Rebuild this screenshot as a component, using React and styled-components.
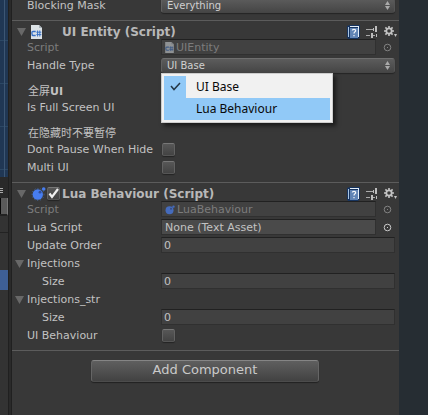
import React from "react";
import styled, { createGlobalStyle, css } from "styled-components";

const GlobalStyle = createGlobalStyle`
  * { box-sizing: border-box; }
  body {
    margin: 0;
    background: #383838;
    color: #c2c2c2;
    font: 11px/16px "DejaVu Sans", "Noto Sans CJK SC", sans-serif;
  }
  button, input, select { font: inherit; color: inherit; }
`;

const Window = styled.div`
  display: grid;
  grid-template-columns: 8px 4px minmax(0, 1fr) 29px;
  min-height: 100vh;
  overflow: hidden;
`;

const LeftDock = styled.div`
  display: flex;
  flex-direction: column;
  background: #333;
`;

const ScenePreview = styled.div`
  height: 177px;
  background:
    linear-gradient(90deg, transparent 4px, #3d5673 4px, #3d5673 5px, transparent 5px),
    repeating-linear-gradient(#203754 0 40px, #2c4865 40px 41px, #203754 41px 43px);
`;

const DockTab = styled.div`
  height: 21px;
  padding-top: 11px;
  background: #292929;
`;

const DockMenu = styled.svg`
  display: block;
  width: 4px;
  height: 6px;
`;

const DockTool = styled.div`
  height: 18px;
  margin-bottom: 16px;
  border-right: 1px solid #777;
  border-bottom: 2px solid #222;
  background: linear-gradient(90deg, #090909 1px, #5a5a5a 1px);
`;

const DockList = styled.div`
  flex: 1;
  padding-top: 37px;
  border-top: 1px solid #222;
`;

const SelectedItem = styled.div`
  height: 20px;
  background: #3e5f96;
`;

const Splitter = styled.div`
  border: solid #202020;
  border-width: 0 1px;
  background: #2a2a2a;
`;

const Inspector = styled.main`
  min-width: 0;
  background: #383838;
`;

const Outside = styled.div`
  background: #262d33;
`;

const Section = styled.section`
  padding-bottom: 6px;
  ${(p) => p.$clipped && css`margin-top: -4px;`}
`;

const Header = styled.header`
  display: flex;
  align-items: center;
  height: 18px;
  padding: 4px 1px 0 5px;
  border-top: 1px solid #5c5c5c;
`;

const Foldout = styled.button`
  display: flex;
  flex: none;
  align-items: center;
  width: ${(p) => (p.$small ? 12 : 14)}px;
  height: 16px;
  padding: 0;
  border: 0;
  background: none;
  color: #686868;
`;

const HeaderIcon = styled.span`
  display: flex;
  flex: none;
  width: 16px;
`;

const HeaderToggle = styled.span`
  display: flex;
  flex: none;
  width: 15px;
`;

const Title = styled.h2`
  flex: 1;
  margin: 0;
  font-size: 12px;
  line-height: 16px;
  white-space: nowrap;
  color: #b8b8b8;
`;

const Tools = styled.div`
  display: flex;
  align-items: center;
  gap: 6px;
`;

const ToolButton = styled.button`
  display: flex;
  padding: 0;
  border: 0;
  background: none;
`;

const Row = styled.div`
  display: grid;
  grid-template-columns: 149px minmax(0, 1fr);
  align-items: center;
  height: 18px;
  padding-right: 4px;
  color: ${(p) => (p.$disabled ? "#7c7c7c" : "#c2c2c2")};
`;

const Label = styled.label`
  padding-top: 2px;
  padding-left: ${(p) => (p.$indent ? 30 : 15)}px;
  white-space: nowrap;
`;

const FoldoutRow = styled.div`
  display: flex;
  align-items: center;
  height: 18px;
  padding-top: 2px;
  padding-left: 3px;
`;

const GroupLabel = styled.h3`
  height: 24px;
  margin: 0;
  padding: 10px 0 0 16px;
  font-size: 11px;
  line-height: 16px;
`;

const Chinese = styled.span`
  font-weight: 400;
`;

const fieldBox = css`
  height: 16px;
  border: 1px solid #303030;
  border-top-color: #212121;
  background: #414141;
`;

const TextField = styled.input`
  ${fieldBox}
  width: 100%;
  padding: 1px 2px 0;
`;

const ObjectLine = styled.div`
  display: grid;
  grid-template-columns: minmax(0, 1fr) 19px;
  align-items: center;
`;

const ObjectField = styled.div`
  ${fieldBox}
  display: flex;
  align-items: center;
  gap: 2px;
  padding: 1px 3px 0;
  line-height: 14px;
  ${(p) => p.$active && css`background: #4a4a4a;`}
`;

const ObjectButton = styled.button`
  display: flex;
  justify-content: center;
  padding: 0 0 0 4px;
  border: 0;
  background: none;
  color: ${(p) => (p.disabled ? "#828282" : "#c8c8c8")};
`;

const PopupBox = styled.div`
  position: relative;
`;

const Popup = styled.select`
  display: block;
  width: 100%;
  height: 15px;
  padding: 0 5px;
  appearance: none;
  border: 1px solid #686868;
  border-color: #6f6f6f #555 #454545 #606060;
  border-radius: 3px;
  background: linear-gradient(#5c5c5c, #464646);
  box-shadow: 0 1px 1px #252525;
  font-size: 10px;
  line-height: 13px;
  color: #d0d0d0;
`;

const PopupArrows = styled.svg`
  position: absolute;
  top: 3px;
  right: 5px;
  pointer-events: none;
`;

const Menu = styled.ul`
  position: absolute;
  z-index: 2;
  top: 15px;
  left: 0;
  width: 172px;
  margin: 0;
  padding: 2px;
  border: 1px solid #ccc;
  background: #f1f1f1;
  box-shadow: 3px 3px 4px #1b1b1b;
  list-style: none;
`;

const MenuItem = styled.button`
  display: grid;
  grid-template-columns: 22px 1fr;
  align-items: center;
  gap: 10px;
  width: 100%;
  height: 22px;
  padding: 0;
  border: 0;
  background: ${(p) => (p.$hover ? "#91c9f7" : "#f1f1f1")};
  color: #080808;
  font: 12px/22px "Noto Sans", sans-serif;
  text-align: left;
`;

const MenuCheck = styled.span`
  display: flex;
  align-items: center;
  justify-content: center;
  height: 22px;
  ${(p) => p.$checked && css`background: #91c9f7;`}
`;

const ToggleBox = styled.span`
  display: grid;
  width: 13px;
  height: 13px;
  ${(p) => !p.$header && css`margin-left: 1px;`}
`;

const Toggle = styled.input`
  grid-area: 1 / 1;
  width: 100%;
  height: 100%;
  margin: 0;
  appearance: none;
  border: 1px solid #626262;
  border-color: #777 #626262 #555;
  border-radius: 2px;
  background: linear-gradient(#575757, #434343);
  box-shadow: 0 1px 1px #242424;
`;

const ToggleMark = styled.svg`
  grid-area: 1 / 1;
  z-index: 1;
  pointer-events: none;
`;

const Footer = styled.footer`
  display: flex;
  justify-content: center;
  padding: 9px 17px 9px 16px;
  border-top: 1px solid #5c5c5c;
`;

const AddButton = styled.button`
  width: 60%;
  min-width: 228px;
  height: 22px;
  padding: 0 0 2px;
  border: 1px solid #606060;
  border-color: #858585 #656565 #4c4c4c;
  border-radius: 3px;
  background: linear-gradient(#5f5f5f, #424242);
  box-shadow: 0 1px 1px #222;
  color: #cacaca;
  font-size: 13px;
  line-height: 18px;
`;

function Triangle() {
  return (
    <svg width="10" height="8" viewBox="0 0 10 8" aria-hidden="true">
      <path d="M0 0h9L4.5 8z" fill="currentColor" />
    </svg>
  );
}

function ScriptIcon({ small }) {
  return (
    <svg width={small ? 9 : 11} height={small ? 11 : 14} viewBox="0 0 11 14" opacity={small ? 0.5 : 1} aria-hidden="true">
      <path d="M0 0h8l3 3v11H0z" fill="#dce2e6" />
      <path d="M8 0v3h3z" fill="#a9b3bb" />
      <path d="M4.7 6.5H2.2C1 6.5.9 7 .9 8.5s.1 2 1.3 2h2.5" fill="none" stroke="#3971c6" strokeWidth="1.4" />
      <path d="M6.6 5.5v6M8.8 5.5v6M5.4 7.2h4.9M5.4 9.6h4.9" stroke="#3971c6" />
    </svg>
  );
}

function LuaIcon({ small }) {
  return (
    <svg width={small ? 10 : 15} height={small ? 10 : 14} viewBox="0 0 15 14" opacity={small ? 0.7 : 1} aria-hidden="true">
      {!small && <circle cx="7" cy="7.4" r="6" fill="none" stroke="#45699f" strokeDasharray="1 2" />}
      <circle cx="6.8" cy="7.5" r={small ? 6 : 5.2} fill="#477df0" />
      <circle cx="12.7" cy="2" r="1.8" fill="#477df0" />
      <circle cx="9" cy="5.2" r="1.4" fill="#304e99" />
    </svg>
  );
}

function HelpIcon() {
  return (
    <svg width="13" height="14" viewBox="0 0 13 14" aria-hidden="true">
      <path d="M0 1L3 0h10v12l-2 2H1L0 12z" fill="#17345f" />
      <path d="M3 1h9v11h-1V2H3z" fill="#e3edf7" />
      <path d="M1 2h1v10H1z" fill="#abc7e5" />
      <path d="M3 3h8v10H3z" fill="#6084b5" />
      <path d="M5.3 5.5c.1-1.5 3.4-1.6 3.4.2 0 1.2-1.7 1.1-1.7 2.8M7 10v1.2" fill="none" stroke="#f3f7fb" strokeWidth="1.2" />
    </svg>
  );
}

function PresetIcon() {
  return (
    <svg width="12" height="12" viewBox="0 0 12 12" aria-hidden="true">
      <path d="M0 3h7v1H0zM0 9h4v1H0zM7 9h2v1H7z" fill="#aaa" />
      <path d="M7 2h1v3H7zM9 0h2v6H9zM5 7h2v5H5zM10 8h1v3h-1z" fill="#bdbdbd" />
    </svg>
  );
}

function GearIcon() {
  return (
    <svg width="14" height="12" viewBox="0 0 14 12" aria-hidden="true">
      <circle cx="5" cy="5" r="2.7" fill="none" stroke="#c3c3c3" strokeWidth="1.8" />
      <path d="M5 0v2M5 8v2M0 5h2M8 5h2M1.4 1.4l1.5 1.5M7.1 7.1l1.5 1.5M1.4 8.6l1.5-1.5M7.1 2.9l1.5-1.5" stroke="#c3c3c3" strokeWidth="1.6" />
      <path d="M10 8h3l-1.5 3z" fill="#c3c3c3" />
    </svg>
  );
}

function CheckBox({ id, header, checked, label }) {
  return (
    <ToggleBox $header={header}>
      <Toggle id={id} type="checkbox" defaultChecked={checked} aria-label={label} />
      {checked && (
        <ToggleMark width="13" height="13" viewBox="0 0 13 13" aria-hidden="true">
          <path d="M2.5 6.5L5 10l6-8" fill="none" stroke="#f1f1f1" strokeWidth="2.2" />
        </ToggleMark>
      )}
    </ToggleBox>
  );
}

function ComponentHeader({ title, icon, enabled }) {
  return (
    <Header>
      <Foldout aria-label={`Collapse ${title}`}><Triangle /></Foldout>
      <HeaderIcon>{icon}</HeaderIcon>
      <HeaderToggle>{enabled && <CheckBox header checked label="Enable Lua Behaviour" />}</HeaderToggle>
      <Title>{title}</Title>
      <Tools>
        <ToolButton aria-label="Help"><HelpIcon /></ToolButton>
        <ToolButton aria-label="Presets"><PresetIcon /></ToolButton>
        <ToolButton aria-label="Settings"><GearIcon /></ToolButton>
      </Tools>
    </Header>
  );
}

function ObjectRow({ label, value, icon, disabled }) {
  return (
    <Row $disabled={disabled}>
      <Label as="span">{label}</Label>
      <ObjectLine>
        <ObjectField $active={!disabled}>{icon}{value}</ObjectField>
        <ObjectButton disabled={disabled} aria-label={`Select ${label}`}>
          <svg width="9" height="9" viewBox="0 0 9 9" aria-hidden="true">
            <circle cx="4.5" cy="4.5" r="3.3" fill="none" stroke="currentColor" />
            <path d="M4 4h1v1H4z" fill="currentColor" />
          </svg>
        </ObjectButton>
      </ObjectLine>
    </Row>
  );
}

function PopupRow({ id, label, value, children }) {
  return (
    <Row>
      <Label htmlFor={id}>{label}</Label>
      <PopupBox>
        <Popup id={id} defaultValue={value}>
          <option>{value}</option>
        </Popup>
        <PopupArrows width="5" height="9" viewBox="0 0 5 9" aria-hidden="true">
          <path d="M0 4l2.5-4L5 4zM0 5h5L2.5 9z" fill="#aaa" />
        </PopupArrows>
        {children}
      </PopupBox>
    </Row>
  );
}

function NumberRow({ id, label, indent }) {
  return (
    <Row>
      <Label htmlFor={id} $indent={indent}>{label}</Label>
      <TextField id={id} type="text" inputMode="numeric" defaultValue="0" />
    </Row>
  );
}

function ToggleRow({ id, label }) {
  return (
    <Row>
      <Label htmlFor={id}>{label}</Label>
      <CheckBox id={id} />
    </Row>
  );
}

function ArrayHeading({ children }) {
  return (
    <FoldoutRow>
      <Foldout $small aria-label={`Collapse ${children}`}><Triangle /></Foldout>
      {children}
    </FoldoutRow>
  );
}

export default function App() {
  return (
    <>
      <GlobalStyle />
      <Window>
        <LeftDock>
          <ScenePreview />
          <DockTab>
            <DockMenu viewBox="0 0 4 6" aria-hidden="true">
              <path d="M0 .5h3M0 2.5h3M0 4.5h3" stroke="#aaa" />
            </DockMenu>
          </DockTab>
          <DockTool />
          <DockList><SelectedItem /></DockList>
        </LeftDock>
        <Splitter />
        <Inspector>
          <Section $clipped>
            <PopupRow id="mask" label="Blocking Mask" value="Everything" />
          </Section>
          <Section>
            <ComponentHeader title="UI Entity (Script)" icon={<ScriptIcon />} />
            <ObjectRow label="Script" value="UIEntity" icon={<ScriptIcon small />} disabled />
            <PopupRow id="handle" label="Handle Type" value="UI Base">
              <Menu aria-label="Handle Type options">
                <li>
                  <MenuItem>
                    <MenuCheck $checked>
                      <svg width="11" height="9" viewBox="0 0 11 9" aria-hidden="true">
                        <path d="M1 4l3 3.5L10 1" fill="none" stroke="#243746" strokeWidth="1.5" />
                      </svg>
                    </MenuCheck>
                    UI Base
                  </MenuItem>
                </li>
                <li><MenuItem $hover><MenuCheck />Lua Behaviour</MenuItem></li>
              </Menu>
            </PopupRow>
            <GroupLabel><Chinese>全屏</Chinese>UI</GroupLabel>
            <ToggleRow id="full" label="Is Full Screen UI" />
            <GroupLabel><Chinese>在隐藏时不要暂停</Chinese></GroupLabel>
            <ToggleRow id="pause" label="Dont Pause When Hide" />
            <ToggleRow id="multi" label="Multi UI" />
          </Section>
          <Section>
            <ComponentHeader title="Lua Behaviour (Script)" icon={<LuaIcon />} enabled />
            <ObjectRow label="Script" value="LuaBehaviour" icon={<LuaIcon small />} disabled />
            <ObjectRow label="Lua Script" value="None (Text Asset)" />
            <NumberRow id="order" label="Update Order" />
            <ArrayHeading>Injections</ArrayHeading>
            <NumberRow id="size" label="Size" indent />
            <ArrayHeading>Injections_str</ArrayHeading>
            <NumberRow id="size-str" label="Size" indent />
            <ToggleRow id="ui" label="UI Behaviour" />
          </Section>
          <Footer><AddButton>Add Component</AddButton></Footer>
        </Inspector>
        <Outside />
      </Window>
    </>
  );
}
